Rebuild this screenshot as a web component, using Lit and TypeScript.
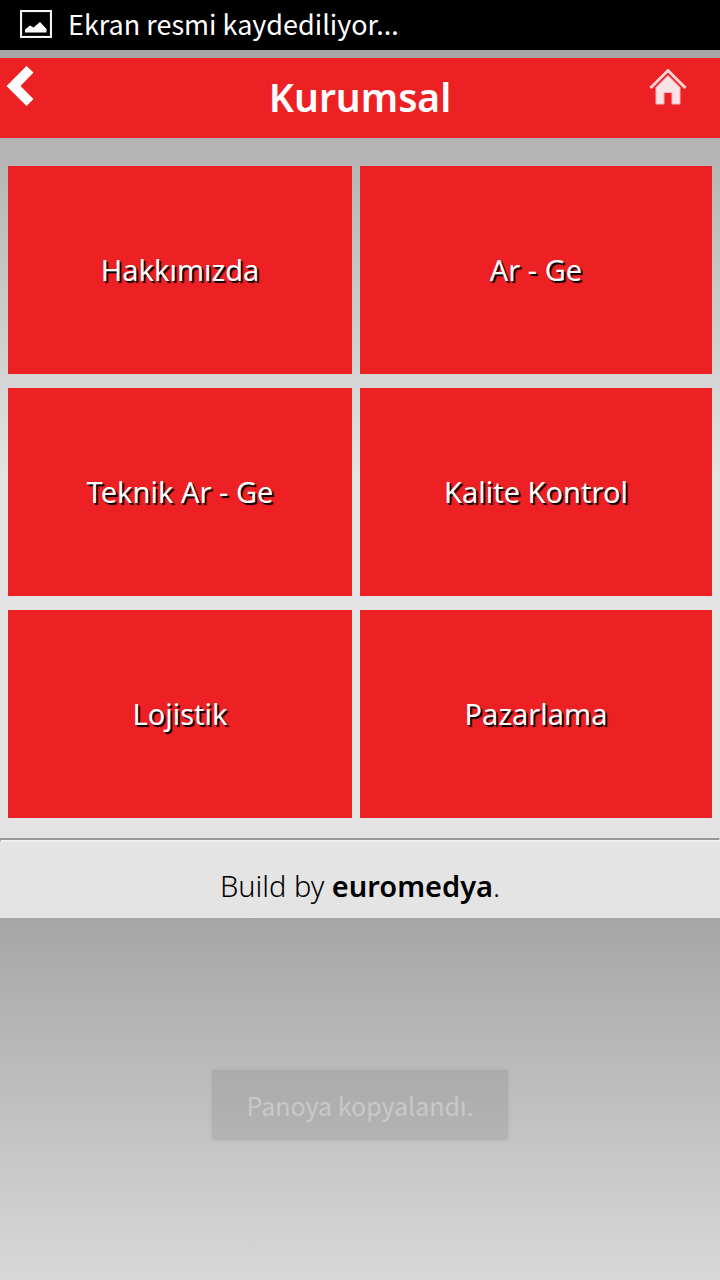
import { LitElement, html, css } from "lit";
import { customElement, state } from "lit/decorators.js";

interface Section {
  label: string;
  href: string;
}

@customElement("app-root")
export class AppRoot extends LitElement {
  static styles = css`
    :host {
      display: block;
      min-height: 100vh;
      font-family: "Noto Sans", sans-serif;
      color: #000;
      background: #000;
    }
    .screen {
      display: flex;
      flex-direction: column;
      min-height: 100vh;
    }
    .status,
    .toast {
      font-family: "Noto Sans CJK SC", "Noto Sans", sans-serif;
    }
    .status {
      display: flex;
      align-items: center;
      gap: 16px;
      height: 50px;
      padding: 0 20px 2px;
      box-sizing: border-box;
      background: #000;
      color: #fff;
      font-size: 27px;
      line-height: 32px;
    }
    .status svg {
      width: 32px;
      height: 28px;
      flex: none;
    }
    .page {
      padding-top: 8px;
      background: linear-gradient(#a6a6a6, #e4e4e4 50%);
    }
    .bar {
      display: grid;
      grid-template-columns: 80px 1fr 80px;
      height: 80px;
      background: #ed2124;
      color: #fff;
    }
    .bar h1 {
      margin: 0;
      font-size: 39px;
      font-weight: 600;
      line-height: 78px;
      text-align: center;
    }
    .icon {
      display: block;
      height: 60px;
    }
    .icon svg {
      display: block;
      width: 80px;
      height: 60px;
    }
    .tiles {
      display: grid;
      grid-template-columns: 1fr 1fr;
      row-gap: 14px;
      padding: 28px 0 20px;
    }
    .cell {
      display: flex;
      padding-right: 8px;
    }
    .cell:nth-child(odd) {
      padding-left: 8px;
    }
    .tile {
      flex: 1;
      display: flex;
      align-items: center;
      justify-content: center;
      min-height: 208px;
      background: #ed2124;
      color: #fff;
      font-size: 29px;
      line-height: 40px;
      text-decoration: none;
      text-shadow: 2px 2px 1px #000;
    }
    .rule {
      margin: 0;
      border: solid;
      border-color: #999 #eee #eee #999;
      border-width: 2px 1px;
      height: 0;
    }
    .credit {
      margin: 0;
      padding: 24px 0 12px;
      font-size: 29px;
      font-weight: 300;
      line-height: 40px;
      text-align: center;
    }
    .credit a {
      color: inherit;
      font-weight: 600;
      text-decoration: none;
    }
    .rest {
      flex: 1;
      display: flex;
      justify-content: center;
      align-items: flex-end;
      min-height: 220px;
      padding-bottom: 140px;
      box-sizing: border-box;
      background: linear-gradient(#a6a6a6, #d8d8d8);
    }
    .toast {
      padding: 18px 35px;
      border-radius: 4px;
      background: rgba(110, 110, 110, 0.2);
      box-shadow: 0 0 4px rgba(90, 90, 90, 0.15);
      color: #c8c8c8;
      font-size: 25px;
      line-height: 34px;
    }
  `;

  @state() private sections: Section[] = [
    { label: "Hakkımızda", href: "#hakkimizda" },
    { label: "Ar - Ge", href: "#ar-ge" },
    { label: "Teknik Ar - Ge", href: "#teknik-ar-ge" },
    { label: "Kalite Kontrol", href: "#kalite-kontrol" },
    { label: "Lojistik", href: "#lojistik" },
    { label: "Pazarlama", href: "#pazarlama" },
  ];

  render() {
    return html`
      <div class="screen">
        <div class="status">
          <svg viewBox="0 0 32 28" aria-hidden="true">
            <rect x="1" y="1" width="30" height="26" fill="none" stroke="#f4f4f4" stroke-width="2.200" />
            <path d="M5 22.500V19.500l5-4 3.500 2 6.500-5.500 6.500 7v3.500z" fill="#fff" />
          </svg>
          <span>Ekran resmi kaydediliyor...</span>
        </div>
        <main class="page">
          <header class="bar">
            <a class="icon" href="#geri" aria-label="Geri">
              <svg viewBox="0 0 80 60" aria-hidden="true">
                <path d="M26.500 8 33.500 14.500 20.500 28 33.500 41 26.500 48 6.500 28z" fill="#fff" />
              </svg>
            </a>
            <h1>Kurumsal</h1>
            <a class="icon" href="#ana-sayfa" aria-label="Ana sayfa">
              <svg viewBox="0 0 80 60" aria-hidden="true">
                <path d="M10.500 30 28 12.500 45.500 30" fill="none" stroke="#f8d4d4" stroke-width="3" />
                <path d="M16 46V29.500L28 17.500 40 29.500V46H32V34.500H24V46z" fill="#f8e4e6" stroke="#f4b4b6" stroke-width="1" />
              </svg>
            </a>
          </header>
          <nav class="tiles">
            ${this.sections.map(
              (s) => html`<div class="cell"><a class="tile" href=${s.href}>${s.label}</a></div>`
            )}
          </nav>
          <hr class="rule" />
          <p class="credit">Build by <a href="#euromedya">euromedya</a>.</p>
        </main>
        <div class="rest">
          <div class="toast" role="status">Panoya kopyalandı.</div>
        </div>
      </div>
    `;
  }
}
